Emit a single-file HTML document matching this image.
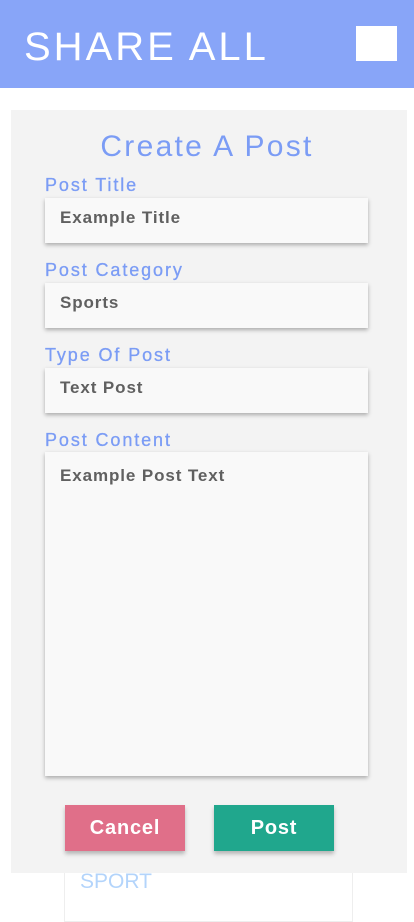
<!DOCTYPE html>
<html><head><meta charset="utf-8"><style>
*{margin:0;padding:0;box-sizing:border-box}
body{width:414px;height:896px;overflow:hidden;background:#fff;font-family:"Liberation Sans",sans-serif;position:relative}
.hdr{position:absolute;left:0;top:0;width:414px;height:88px;background:#88a5f8}
.hdr h1{position:absolute;left:24px;top:24px;font-size:40px;font-weight:400;color:#fff;letter-spacing:3px;line-height:46px}
.sq{position:absolute;left:356px;top:26px;width:41px;height:35px;background:#fff}
.card{position:absolute;left:64px;top:862px;width:289px;height:60px;background:#fff;border:1px solid #eee}
.sport{position:absolute;left:80px;top:870px;font-size:21px;color:#b3d4fb}
.panel{position:absolute;left:11px;top:110px;width:396px;height:763px;background:#f3f3f3}
.h2{position:absolute;left:0;width:414px;top:129px;text-align:center;font-size:30px;color:#7b9cf5;letter-spacing:2.3px;line-height:36px}
.lb{position:absolute;left:45px;font-size:18px;color:#7b9cf5;letter-spacing:1.9px;line-height:22px;-webkit-text-stroke:.3px #7b9cf5}
.in{position:absolute;left:45px;width:323px;height:45px;background:#f9f9f9;box-shadow:0 2px 4px rgba(0,0,0,.3);font-size:17px;font-weight:bold;color:#606060;padding:10px 0 0 15px;letter-spacing:.9px}
.btn{position:absolute;top:805px;width:120px;height:46px;color:#fff;font-size:20px;font-weight:bold;text-align:center;line-height:46px;box-shadow:0 3px 4px rgba(0,0,0,.25);letter-spacing:.8px}
</style></head><body>
<div class="hdr"><h1>SHARE ALL</h1><div class="sq"></div></div>
<div class="card"></div><div class="sport">SPORT</div>
<div class="panel"></div>
<div class="h2">Create A Post</div>
<div class="lb" style="top:174px">Post Title</div>
<div class="in" style="top:198px">Example Title</div>
<div class="lb" style="top:259px">Post Category</div>
<div class="in" style="top:283px">Sports</div>
<div class="lb" style="top:344px">Type Of Post</div>
<div class="in" style="top:368px">Text Post</div>
<div class="lb" style="top:429px">Post Content</div>
<div class="in" style="top:452px;height:324px;padding-top:14px">Example Post Text</div>
<div class="btn" style="left:65px;background:#e06f89">Cancel</div>
<div class="btn" style="left:214px;background:#20a78d">Post</div>
</body></html>
